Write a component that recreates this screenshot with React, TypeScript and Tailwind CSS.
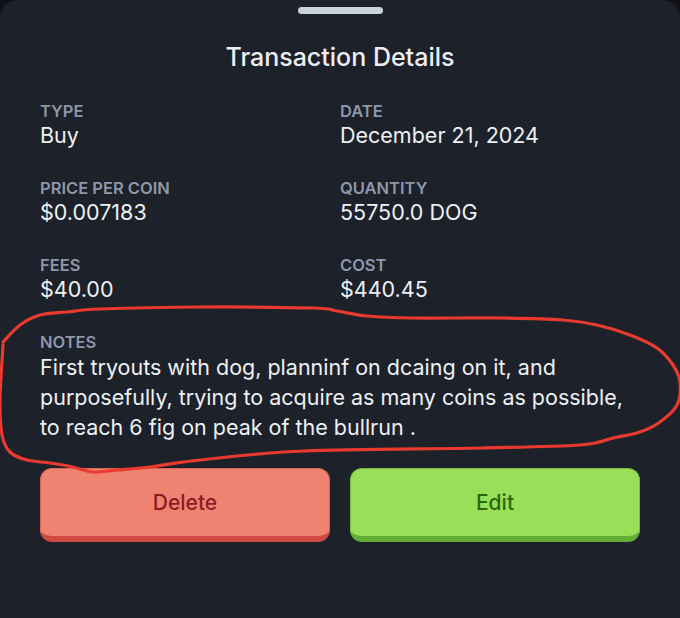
import React from 'react';

type Field = { label: string; value: string };

const FIELDS: Field[] = [
  { label: 'Type', value: 'Buy' },
  { label: 'Date', value: 'December 21, 2024' },
  { label: 'Price per coin', value: '$0.007183' },
  { label: 'Quantity', value: '55750.0 DOG' },
  { label: 'Fees', value: '$40.00' },
  { label: 'Cost', value: '$440.45' },
];

const NOTES =
  'First tryouts with dog, planninf on dcaing on it, and purposefully, trying to acquire as many coins as possible, to reach 6 fig on peak of the bullrun .';

// hand-drawn circle around the notes, as points on the 680x618 canvas
const SCRIBBLE: [number, number][] = [
  [3, 342], [20, 325], [40, 315], [67, 312], [100, 309], [200, 307], [313, 308],
  [337, 311], [367, 316], [413, 318], [500, 318], [563, 320], [597, 325], [630, 335],
  [657, 348], [673, 365], [680, 382], [677, 405], [660, 422], [640, 432], [613, 438],
  [580, 445], [480, 448], [304, 451], [200, 460], [150, 467], [117, 470], [93, 472],
  [73, 467], [50, 463], [27, 460], [10, 452], [2, 435], [0, 400], [3, 345],
];

function smoothPath(pts: [number, number][]): string {
  let d = `M ${pts[0][0]} ${pts[0][1]}`;
  for (let i = 0; i < pts.length - 1; i++) {
    const p0 = pts[i - 1] ?? pts[i];
    const p1 = pts[i];
    const p2 = pts[i + 1];
    const p3 = pts[i + 2] ?? p2;
    const c1x = p1[0] + (p2[0] - p0[0]) / 6;
    const c1y = p1[1] + (p2[1] - p0[1]) / 6;
    const c2x = p2[0] - (p3[0] - p1[0]) / 6;
    const c2y = p2[1] - (p3[1] - p1[1]) / 6;
    d += ` C ${c1x} ${c1y} ${c2x} ${c2y} ${p2[0]} ${p2[1]}`;
  }
  return d;
}

export default function App() {
  return (
    <div className="h-[618px] w-[680px] bg-[#101217]" style={{ fontFamily: 'Inter, "Noto Sans", sans-serif' }}>
      <div className="relative h-full overflow-hidden rounded-t-[18px] bg-[#1d212a]">
        <div className="flex justify-center pt-[7px]">
          <div className="h-[7px] w-[85px] rounded-full bg-[#c9d1dd]" />
        </div>

        <h1 className="mt-[27px] text-center text-[25px] leading-8 font-medium text-[#eceef2]">Transaction Details</h1>

        <div className="mt-[28px] grid grid-cols-2 gap-y-[29px] px-10">
          {FIELDS.map((f) => (
            <div key={f.label}>
              <p className="text-[16.5px] leading-5 font-semibold uppercase text-[#8e97aa]">{f.label}</p>
              <p className="text-[21.5px] leading-7 text-[#eef0f4]">{f.value}</p>
            </div>
          ))}
          <div className="col-span-2">
            <p className="text-[16.5px] leading-5 font-semibold uppercase text-[#8e97aa]">Notes</p>
            <p className="text-[21.5px] leading-[30px] text-[#eef0f4]">{NOTES}</p>
          </div>
        </div>

        <div className="mt-[26px] grid grid-cols-2 gap-5 px-10">
          <button
            type="button"
            className="h-[74px] rounded-[12px] border border-[#dc6357] border-b-[6px] border-b-[#cd4941] bg-[#ef8271] text-[21px] font-medium text-[#8a1c25]"
          >
            Delete
          </button>
          <button
            type="button"
            className="h-[74px] rounded-[12px] border border-[#74bd42] border-b-[6px] border-b-[#63ad35] bg-[#99df58] text-[21px] font-medium text-[#2c6610]"
          >
            Edit
          </button>
        </div>

        <svg className="pointer-events-none absolute inset-0 h-full w-full" viewBox="0 0 680 618" fill="none">
          <path d={smoothPath(SCRIBBLE)} stroke="#ea3a2f" strokeWidth={3.2} strokeLinecap="round" strokeLinejoin="round" />
        </svg>
      </div>
    </div>
  );
}
